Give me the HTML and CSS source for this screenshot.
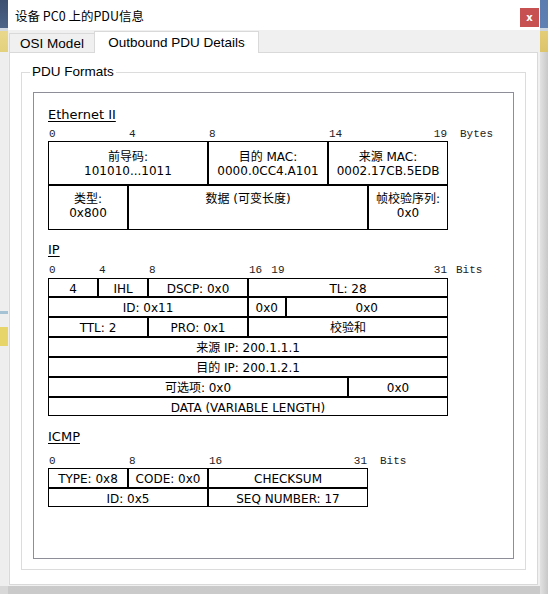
FILE: index.html
```html
<!DOCTYPE html>
<html lang="zh-CN">
<head>
<meta charset="utf-8">
<title>设备 PC0 上的PDU信息</title>
<link rel="stylesheet" href="styles.css">
</head>
<body>
<div class="screen">
  <div class="bg-left"></div>
  <div class="window">
    <div class="titlebar">
      <span class="title">设备 PC0 上的PDU信息</span>
      <span class="close">x</span>
    </div>
    <div class="tabs">
      <div class="tab osi">OSI Model</div>
      <div class="tab active">Outbound PDU Details</div>
    </div>
    <div class="panel">
      <fieldset class="group">
        <legend>PDU Formats</legend>
        <div class="inner">
          <div class="proto eth-title">Ethernet II</div>
          <div class="ruler eth-ruler">
            <div class="marks eth">
              <span class="mark s4">0</span>
              <span class="mark s4">4</span>
              <span class="mark s6">8</span>
              <span class="mark pair s6"><span>14</span><span>19</span></span>
            </div>
            <span class="unit unit-eth">Bytes</span>
          </div>
          <div class="fields eth">
            <div class="cell s8"><span>前导码:</span><span>101010...1011</span></div>
            <div class="cell s6"><span>目的 MAC:</span><span>0000.0CC4.A101</span></div>
            <div class="cell s6"><span>来源 MAC:</span><span>0002.17CB.5EDB</span></div>
            <div class="cell low s4"><span>类型:</span><span>0x800</span></div>
            <div class="cell low s12"><span>数据 (可变长度)</span></div>
            <div class="cell low s4"><span>帧校验序列:</span><span>0x0</span></div>
          </div>

          <div class="proto ip-title">IP</div>
          <div class="ruler ip-ruler">
            <div class="marks ip">
              <span class="mark s4">0</span>
              <span class="mark s4">4</span>
              <span class="mark s8">8</span>
              <span class="mark pair s3"><span>16</span><span>19</span></span>
              <span class="mark end s13">31</span>
            </div>
            <span class="unit unit-ip">Bits</span>
          </div>
          <div class="fields ip">
            <div class="cell s4">4</div>
            <div class="cell s4">IHL</div>
            <div class="cell s8">DSCP: 0x0</div>
            <div class="cell s16">TL: 28</div>
            <div class="cell s16">ID: 0x11</div>
            <div class="cell s3">0x0</div>
            <div class="cell s13">0x0</div>
            <div class="cell s8">TTL: 2</div>
            <div class="cell s8">PRO: 0x1</div>
            <div class="cell s16">校验和</div>
            <div class="cell s32">来源 IP: 200.1.1.1</div>
            <div class="cell s32">目的 IP: 200.1.2.1</div>
            <div class="cell s24">可选项: 0x0</div>
            <div class="cell s8">0x0</div>
            <div class="cell s32">DATA (VARIABLE LENGTH)</div>
          </div>

          <div class="proto icmp-title">ICMP</div>
          <div class="ruler icmp-ruler">
            <div class="marks icmp">
              <span class="mark s8">0</span>
              <span class="mark s8">8</span>
              <span class="mark pair s16"><span>16</span><span>31</span></span>
            </div>
            <span class="unit unit-icmp">Bits</span>
          </div>
          <div class="fields icmp">
            <div class="cell s8">TYPE: 0x8</div>
            <div class="cell s8">CODE: 0x0</div>
            <div class="cell s16">CHECKSUM</div>
            <div class="cell s16">ID: 0x5</div>
            <div class="cell s16">SEQ NUMBER: 17</div>
          </div>
        </div>
      </fieldset>
    </div>
  </div>
  <div class="bg-right"></div>
</div>
</body>
</html>
```

FILE: styles.css
```css
html, body {
  margin: 0;
  padding: 0;
}

body {
  width: 548px;
  height: 594px;
  overflow: hidden;
  font-family: "DejaVu Sans", "Noto Sans CJK SC", sans-serif;
  color: #000;
}

.screen {
  display: flex;
  width: 548px;
  height: 594px;
  background: linear-gradient(to bottom, #dcdcdc, #cacaca);
}

.bg-left {
  width: 8px;
  flex: none;
  background: linear-gradient(to bottom,
    #3d5070 0, #4d6588 28px,
    #d3dae2 28px, #d3dae2 31px,
    #e9d88c 31px, #e4d17c 52px,
    #eeeeee 52px, #eeeeee 311px,
    #a5c2d4 311px, #a5c2d4 314px,
    #eeeeee 314px, #eeeeee 327px,
    #e7d56a 327px, #e7d56a 346px,
    #eeeeee 346px, #eeeeee 586px,
    #d8d8d8 586px);
}

.bg-right {
  flex: 1;
  background:
    linear-gradient(to bottom,
      #5b7cae 0, #5e80b2 28px,
      #cdd6e0 28px, #cdd6e0 31px,
      #e3cd76 31px, #dcc46a 52px,
      transparent 52px),
    linear-gradient(to right, #e2e2e2, #c8c8c8);
}

.window {
  width: 532px;
  height: 586px;
  flex: none;
  display: flex;
  flex-direction: column;
  background: #f0f0f0;
}

.titlebar {
  height: 30px;
  flex: none;
  display: flex;
  justify-content: space-between;
  align-items: flex-start;
  background: #fff;
}

.title {
  padding-left: 7px;
  line-height: 32px;
  font-family: "Noto Sans CJK SC", "Liberation Sans", sans-serif;
  font-size: 12.5px;
}

.close {
  width: 19px;
  height: 19px;
  margin: 8px 1px 0 0;
  background: #c75050;
  color: #fff;
  font-family: "DejaVu Sans", sans-serif;
  font-weight: bold;
  font-size: 10px;
  display: flex;
  align-items: center;
  justify-content: center;
}

.tabs {
  height: 22px;
  flex: none;
  display: flex;
  align-items: flex-end;
  padding-left: 1px;
}

.tab {
  box-sizing: border-box;
  display: flex;
  align-items: center;
  justify-content: center;
  font-family: "Liberation Sans", Arial, sans-serif;
  font-size: 13.5px;
}

.tab.osi {
  width: 85px;
  height: 19px;
  border: 1px solid #d9d9d9;
  border-right: 0;
  border-bottom: 0;
  background: #f0f0f0;
}

.tab.active {
  width: 165px;
  height: 22px;
  margin-bottom: -1px;
  border: 1px solid #d9d9d9;
  border-bottom: 0;
  background: #fff;
  position: relative;
  z-index: 1;
}

.panel {
  flex: 1;
  margin: 0 2px 1px 1px;
  border: 1px solid #d9d9d9;
  background: #fff;
}

.group {
  margin: 11px 11px 14px;
  border: 1px solid #dcdcdc;
  padding: 12px 11px 10px;
  min-width: 0;
}

.group legend {
  font-family: "Liberation Sans", Arial, sans-serif;
  font-size: 13.5px;
  line-height: 16px;
  padding: 0 2px;
  margin-left: -3px;
}

.inner {
  box-sizing: border-box;
  height: 467px;
  border: 1px solid #8e8e98;
  padding-left: 14px;
}

.proto {
  font-size: 13px;
  line-height: 16px;
  text-decoration: underline;
  text-underline-offset: 2px;
}

.eth-title { margin-top: 14px; }
.ip-title { margin-top: 12px; }
.icmp-title { margin-top: 13px; }

.ruler {
  display: flex;
  height: 13px;
  font-family: "Liberation Mono", "Courier New", monospace;
  font-size: 11px;
  line-height: 13px;
  color: #222;
}

.eth-ruler { margin-top: 5px; }
.ip-ruler { margin-top: 6px; height: 14px; }
.icmp-ruler { margin-top: 10px; }

.marks { display: grid; }
.marks.eth { grid-template-columns: repeat(20, 20px); }
.marks.ip { grid-template-columns: repeat(32, 12.5px); }
.marks.icmp { grid-template-columns: repeat(32, 10px); }

.mark { padding-left: 1px; white-space: nowrap; }
.mark.pair {
  display: flex;
  justify-content: space-between;
  padding-right: 1px;
}
.mark.end { text-align: right; padding-right: 1px; }

.unit-eth { margin-left: 12px; }
.unit-ip { margin-left: 8px; }
.unit-icmp { margin-left: 12px; }

.s3 { grid-column: span 3; }
.s4 { grid-column: span 4; }
.s6 { grid-column: span 6; }
.s8 { grid-column: span 8; }
.s12 { grid-column: span 12; }
.s13 { grid-column: span 13; }
.s16 { grid-column: span 16; }
.s24 { grid-column: span 24; }
.s32 { grid-column: span 32; }

.fields {
  display: grid;
  font-size: 12px;
}

.fields.eth {
  grid-template-columns: repeat(20, 20px);
  grid-template-rows: 44px 45px;
}

.fields.ip {
  grid-template-columns: repeat(32, 12.5px);
  grid-template-rows: 19px repeat(5, 20px) 19px;
}

.fields.icmp {
  grid-template-columns: repeat(32, 10px);
  grid-template-rows: 20px 19px;
}

.cell {
  box-sizing: border-box;
  border: 1px solid #000;
  text-align: center;
  white-space: nowrap;
  overflow: hidden;
}

.fields.eth .cell {
  display: flex;
  flex-direction: column;
  justify-content: center;
  line-height: 14px;
  padding-top: 2px;
}

.fields.eth .cell.low {
  justify-content: flex-start;
  padding-top: 6px;
}

.fields.ip .cell,
.fields.icmp .cell {
  line-height: 14px;
  padding-top: 3px;
}
```
